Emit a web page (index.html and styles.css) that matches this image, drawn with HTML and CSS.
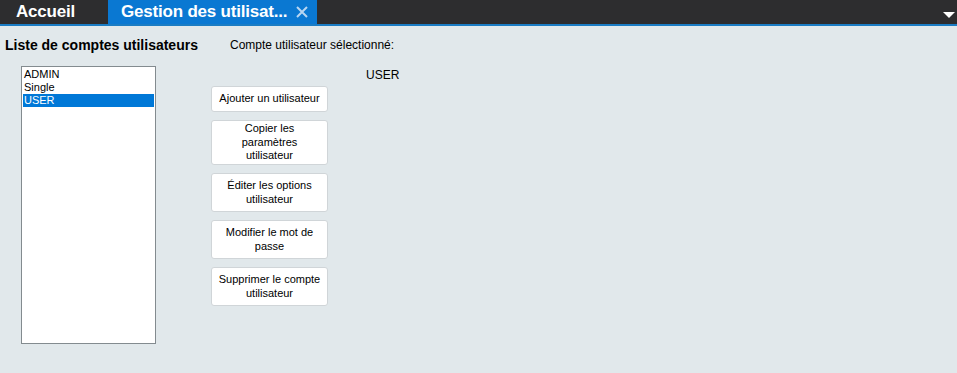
FILE: index.html
```html
<!DOCTYPE html>
<html lang="fr">
<head>
  <meta charset="UTF-8">
  <title>Gestion des utilisateurs</title>
  <link rel="stylesheet" href="styles.css">
</head>
<body>
  <div class="tabbar">
    <div class="tab">Accueil</div>
    <div class="tab active">Gestion des utilisat...
      <svg class="close" width="12" height="12" viewBox="0 0 12 12"><path d="M1 1 L11 11 M11 1 L1 11" stroke="#b8d6f2" stroke-width="2"/></svg>
    </div>
    <div class="tab-menu">
      <svg width="12" height="6" viewBox="0 0 12 6"><path d="M0 0 H12 L6 6 Z" fill="#ffffff"/></svg>
    </div>
  </div>

  <div class="content">
    <!-- Left column : user list -->
    <div class="list-panel">
      <div class="panel-title">Liste de comptes utilisateurs</div>
      <ul class="user-list">
        <li>ADMIN</li>
        <li>Single</li>
        <li class="selected">USER</li>
      </ul>
    </div>

    <!-- Right column : selected user + actions -->
    <div class="detail-panel">
      <div class="detail-label">Compte utilisateur sélectionné:</div>
      <div class="detail-body">
        <div class="actions">
          <button class="btn btn-small">Ajouter un utilisateur</button>
          <button class="btn btn-tall">Copier les paramètres utilisateur</button>
          <button class="btn">Éditer les options utilisateur</button>
          <button class="btn">Modifier le mot de passe</button>
          <button class="btn">Supprimer le compte utilisateur</button>
        </div>
        <div class="selected-name">USER</div>
      </div>
    </div>
  </div>
</body>
</html>
```

FILE: styles.css
```css
body {
  margin: 0;
  padding: 0;
  background-color: #e1e8eb;
  font-family: 'Liberation Sans', Arial, sans-serif;
  color: #000000;
  height: 373px;
  overflow: hidden;
}

/* Top tab strip */
.tabbar {
  display: flex;
  align-items: stretch;
  height: 24px;
  background-color: #2d2d2f;
  border-bottom: 2px solid #1a7cc4;
}

.tab {
  color: #ffffff;
  font-weight: bold;
  font-size: 17px;
  line-height: 24px;
  padding: 0 12px 0 16px;
  width: 80px;
  letter-spacing: -0.2px;
}

.tab.active {
  background-color: #0a78d2;
  width: auto;
  padding: 0 9px 0 13px;
  display: flex;
  align-items: center;
}

.close {
  margin-left: 9px;
}

.tab-menu {
  margin-left: auto;
  display: flex;
  align-items: flex-end;
  padding: 0 2px 6px 0;
}

/* Main area */
.content {
  display: flex;
  padding: 12px 0 0 5px;
}

.list-panel {
  width: 225px;
}

.panel-title {
  font-weight: bold;
  font-size: 14px;
  height: 28px;
  margin-top: -1px;
  margin-bottom: 1px;
}

.user-list {
  list-style: none;
  margin: 0 0 0 16px;
  padding: 1px;
  width: 131px;
  height: 274px;
  background-color: #ffffff;
  border: 1px solid #838b8f;
  font-size: 11px;
}

.user-list li {
  height: 13px;
  line-height: 13px;
  padding-left: 1px;
}

.user-list li.selected {
  background-color: #0078d7;
  color: #ffffff;
}

.detail-panel {
  display: flex;
  flex-direction: column;
}

.detail-label {
  font-size: 12px;
  height: 28px;
}

.detail-body {
  display: flex;
  margin-left: -19px;
}

.actions {
  display: flex;
  flex-direction: column;
  gap: 8px;
  padding-top: 20px;
}

.btn {
  width: 117px;
  height: 39px;
  padding: 0 6px;
  background-color: #ffffff;
  border: 1px solid #d0d5d8;
  border-radius: 3px;
  font-family: 'Liberation Sans', Arial, sans-serif;
  font-size: 11px;
  line-height: 13.5px;
  color: #000000;
  text-align: center;
}

.btn-small {
  height: 26px;
}

.btn-tall {
  height: 45px;
}

.selected-name {
  font-size: 12px;
  margin: 2px 0 0 38px;
}
```
